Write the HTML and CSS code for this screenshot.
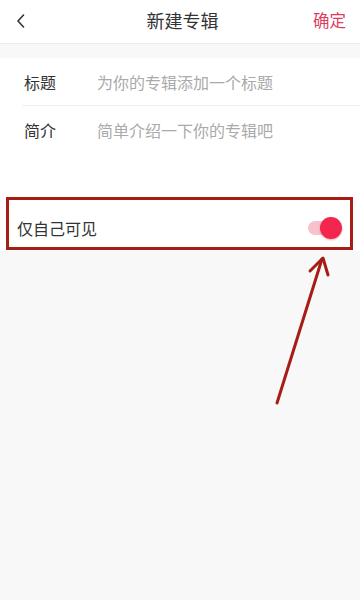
FILE: index.html
```html
<!DOCTYPE html>
<html lang="zh-CN">
<head>
<meta charset="utf-8">
<title>新建专辑</title>
<link rel="stylesheet" href="styles.css">
</head>
<body>
<div class="page">
  <header class="topbar">
    <span class="back">
      <svg width="10" height="14" viewBox="0 0 10 14"><path d="M7.5 1 L2 7 L7.5 13" fill="none" stroke="#333" stroke-width="1.6" stroke-linecap="round" stroke-linejoin="round"/></svg>
    </span>
    <h1 class="title">新建专辑</h1>
    <span class="confirm">确定</span>
  </header>
  <div class="gap"></div>
  <section class="card">
    <div class="field field-first">
      <span class="label">标题</span>
      <span class="placeholder">为你的专辑添加一个标题</span>
    </div>
    <div class="field">
      <span class="label">简介</span>
      <span class="placeholder">简单介绍一下你的专辑吧</span>
    </div>
    <div class="spacer"></div>
    <div class="privacy">
      <span class="privacy-text">仅自己可见</span>
      <span class="switch"><span class="track"></span><span class="knob"></span></span>
    </div>
  </section>
  <svg class="arrow" width="360" height="600" viewBox="0 0 360 600">
    <path d="M277 403 L322 259" fill="none" stroke="#a81c16" stroke-width="3" stroke-linecap="round"/>
    <path d="M310 271 L323 258 L328 275" fill="none" stroke="#a81c16" stroke-width="3" stroke-linecap="round" stroke-linejoin="round"/>
  </svg>
</div>
</body>
</html>
```

FILE: styles.css
```css
* { box-sizing: border-box; }
html, body { margin: 0; padding: 0; }
body {
  background: #f8f8f8;
  font-family: "Noto Sans CJK SC", "Noto Sans", sans-serif;
  color: #333;
}
.page {
  position: relative;
  width: 360px;
  height: 600px;
  overflow: hidden;
  background: #f8f8f8;
}
.topbar {
  height: 44px;
  background: #fff;
  border-bottom: 1px solid #ececec;
  display: flex;
  align-items: center;
  justify-content: space-between;
  padding: 0 14px 4px 16px;
}
.back { width: 30px; display: flex; align-items: center; padding-top: 2px; }
.title {
  margin: 0;
  font-size: 18px;
  font-weight: 400;
  color: #333;
  line-height: 24px;
  padding-left: 6px;
}
.confirm {
  font-size: 16.5px;
  color: #dc3d5e;
  line-height: 24px;
}
.gap { height: 14px; }
.card {
  background: #fff;
  padding-bottom: 1px;
}
.field {
  margin-left: 22px;
  height: 48px;
  display: flex;
  align-items: center;
  font-size: 16px;
}
.field-first { border-bottom: 1px solid #eeeeee; }
.label { width: 75px; padding-left: 2px; color: #333; }
.placeholder { color: #aaa; }
.spacer { height: 43px; }
.privacy {
  margin: 0 7px 0 6px;
  height: 53px;
  border: 3px solid #a81c16;
  display: flex;
  align-items: center;
  justify-content: space-between;
  padding: 8px 8px 0 8px;
}
.privacy-text { font-size: 16px; color: #333; }
.switch {
  position: relative;
  width: 36px;
  height: 22px;
  display: block;
}
.track {
  position: absolute;
  left: 2px;
  top: 4px;
  width: 30px;
  height: 14px;
  border-radius: 7px;
  background: #f7c2cc;
}
.knob {
  position: absolute;
  right: 0;
  top: 0;
  width: 22px;
  height: 22px;
  border-radius: 50%;
  background: #f2264f;
  box-shadow: 0 1px 2px rgba(200, 20, 50, 0.35);
}
.arrow {
  position: absolute;
  left: 0;
  top: 0;
  pointer-events: none;
}
```
